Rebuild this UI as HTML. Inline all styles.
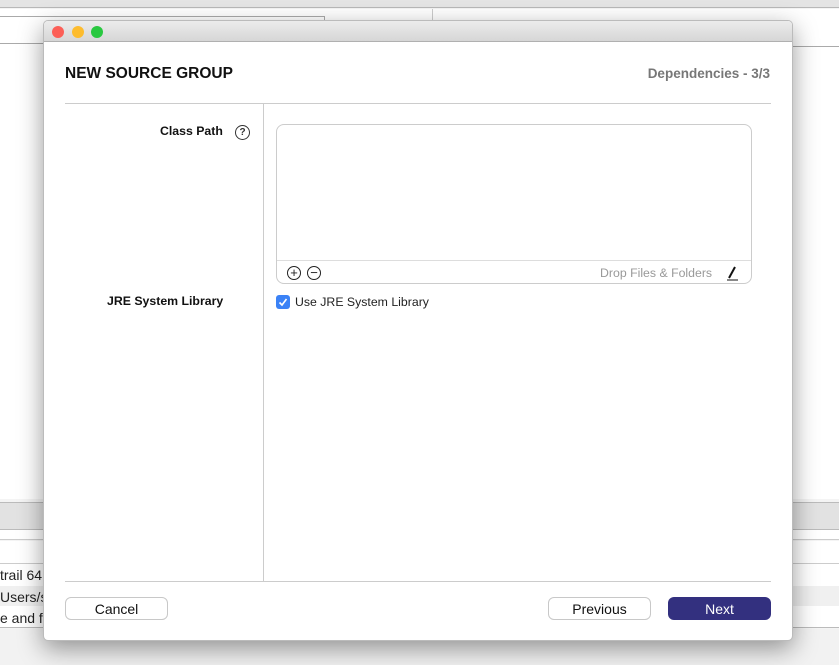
<!DOCTYPE html>
<html><head><meta charset="utf-8"><style>
*{box-sizing:border-box;margin:0;padding:0}
body{width:839px;height:665px;overflow:hidden;background:#f4f4f4;font-family:"Liberation Sans",sans-serif;position:relative}
.a{position:absolute}
</style></head><body>
<div class="a" style="left:0;top:0;width:839px;height:8px;background:#e4e4e4;border-bottom:1px solid #b8b8b8"></div>
<div class="a" style="left:0;top:9px;width:839px;height:490px;background:#fff"></div>
<div class="a" style="left:0;top:16px;width:325px;height:28px;border-top:1px solid #aaa;border-bottom:1px solid #aaa;border-right:1px solid #aaa"></div>
<div class="a" style="left:432px;top:9px;width:1px;height:36px;background:#ccc"></div>
<div class="a" style="left:793px;top:46px;width:46px;height:1px;background:#aaa"></div>
<div class="a" style="left:0;top:502px;width:839px;height:28px;background:#e2e2e2;border-top:1px solid #bbb;border-bottom:1px solid #bbb"></div>
<div class="a" style="left:0;top:530px;width:839px;height:10px;background:#fff;border-bottom:1px solid #ccc"></div>
<div class="a" style="left:0;top:541px;width:839px;height:23px;background:#fff;border-bottom:1px solid #ccc"></div>
<div class="a" style="left:0;top:564px;width:839px;height:22px;background:#fff"></div>
<div class="a" style="left:0;top:586px;width:839px;height:20px;background:#f0f0f0"></div>
<div class="a" style="left:0;top:606px;width:839px;height:22px;background:#fff;border-bottom:1px solid #bbb"></div>
<div class="a" style="left:0;top:567px;font-size:14px;color:#222">trail 64</div>
<div class="a" style="left:0;top:589px;font-size:14px;color:#222">Users/s</div>
<div class="a" style="left:0;top:610px;font-size:14px;color:#222">e and fi</div>
<div class="a" style="left:0;top:629px;width:839px;height:36px;background:#f2f2f2"></div>
<div class="a" style="left:43px;top:20px;width:750px;height:621px;background:#fff;border-radius:5px;box-shadow:0 8px 25px rgba(0,0,0,.4);border:1px solid #bbb;overflow:hidden">
 <div style="height:21px;background:linear-gradient(#ececec,#d6d6d6);border-bottom:1px solid #b0b0b0;position:relative">
  <div class="a" style="left:8px;top:5px;width:12px;height:12px;border-radius:50%;background:#fc5f57"></div>
  <div class="a" style="left:28px;top:5px;width:12px;height:12px;border-radius:50%;background:#fdbc2e"></div>
  <div class="a" style="left:47px;top:5px;width:12px;height:12px;border-radius:50%;background:#29c840"></div>
 </div>
</div>
<div class="a" style="left:65px;top:65px;font-size:15.5px;font-weight:bold;color:#111">NEW SOURCE GROUP</div>
<div class="a" style="right:69px;top:66px;font-size:13.5px;font-weight:bold;color:#777">Dependencies - 3/3</div>
<div class="a" style="left:65px;top:103px;width:706px;height:1px;background:#ccc"></div>
<div class="a" style="left:263px;top:104px;width:1px;height:477px;background:#ccc"></div>
<div class="a" style="left:65px;top:581px;width:706px;height:1px;background:#ccc"></div>
<div class="a" style="left:160px;top:124px;font-size:12.3px;font-weight:bold;color:#111">Class Path</div>
<div class="a" style="left:235px;top:125px;width:15px;height:15px;border:1.3px solid #333;border-radius:50%;font-size:10px;font-weight:bold;text-align:center;line-height:13px;color:#333">?</div>
<div class="a" style="left:107px;top:294px;font-size:12.3px;font-weight:bold;color:#111">JRE System Library</div>
<div class="a" style="left:276px;top:124px;width:476px;height:160px;border:1px solid #ccc;border-radius:8px"></div>
<div class="a" style="left:277px;top:260px;width:474px;height:1px;background:#ddd"></div>
<div class="a" style="left:287px;top:266px;width:14px;height:14px;border:1.3px solid #222;border-radius:50%;font-size:13px;line-height:11px;text-align:center;color:#222">+</div>
<div class="a" style="left:307px;top:266px;width:14px;height:14px;border:1.3px solid #222;border-radius:50%;font-size:13px;line-height:11px;text-align:center;color:#222">−</div>
<div class="a" style="left:600px;top:266px;font-size:12.3px;color:#999">Drop Files &amp; Folders</div>
<svg class="a" style="left:724px;top:264px" width="16" height="18"><path d="M5 14 L11 3" stroke="#111" stroke-width="2"/><path d="M3 16 H14" stroke="#111" stroke-width="1"/></svg>
<div class="a" style="left:276px;top:295px;width:14px;height:14px;background:#3b82f6;border-radius:3px"><svg width="14" height="14"><path d="M3.5 7.5 L6 10 L10.5 4" stroke="#fff" stroke-width="1.6" fill="none"/></svg></div>
<div class="a" style="left:295px;top:295px;font-size:12.3px;color:#222">Use JRE System Library</div>
<div class="a" style="left:65px;top:597px;width:103px;height:23px;border:1px solid #c8c8c8;border-radius:6px;font-size:14px;text-align:center;line-height:23px;color:#111">Cancel</div>
<div class="a" style="left:548px;top:597px;width:103px;height:23px;border:1px solid #c8c8c8;border-radius:6px;font-size:14px;text-align:center;line-height:23px;color:#111">Previous</div>
<div class="a" style="left:668px;top:597px;width:103px;height:23px;background:#33307f;border-radius:6px;font-size:14px;text-align:center;line-height:24px;color:#fff">Next</div>
</body></html>
